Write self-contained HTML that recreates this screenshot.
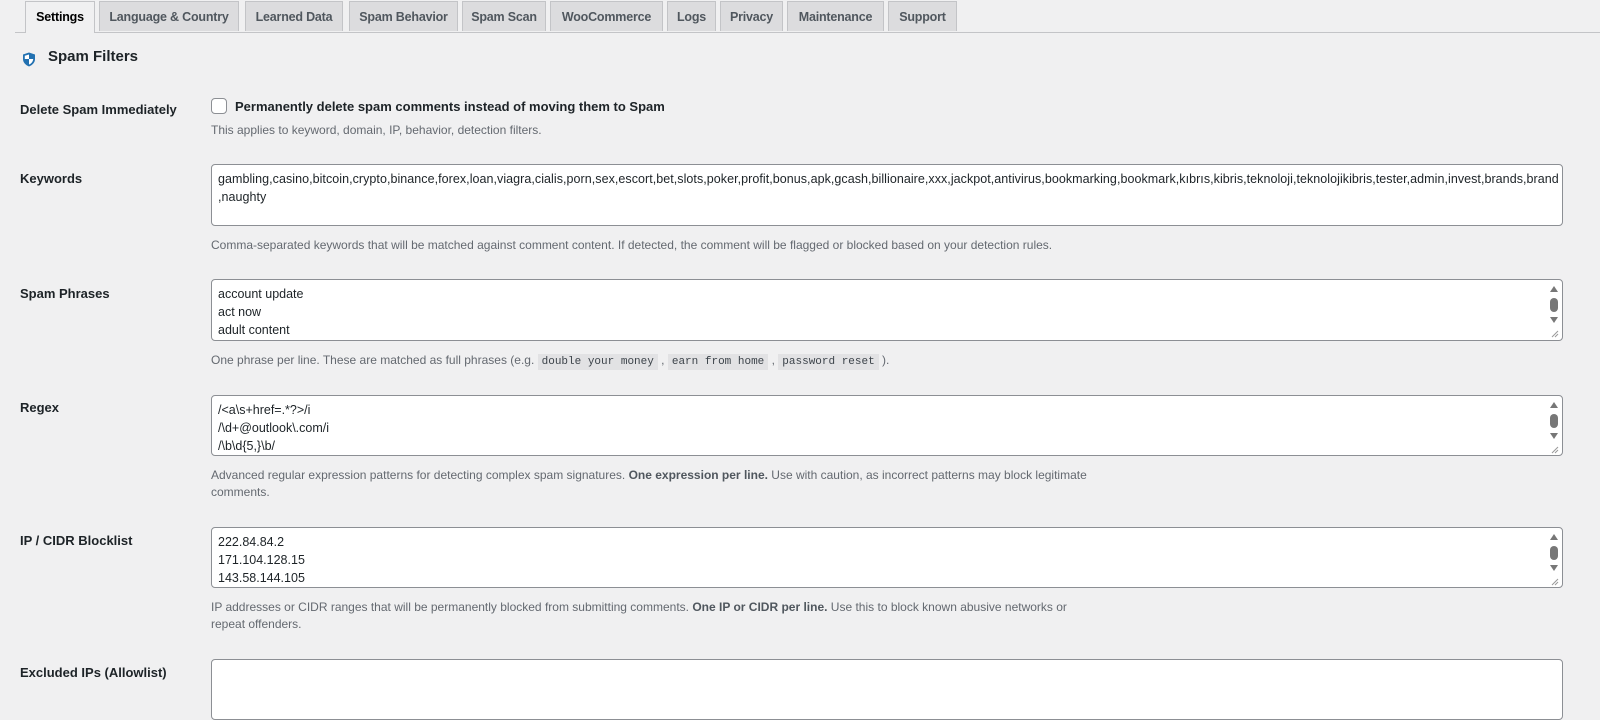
<!DOCTYPE html>
<html><head><meta charset="utf-8"><style>
body{margin:0;width:1600px;height:694px;overflow:hidden;background:#f0f0f1;font-family:"Liberation Sans",sans-serif;color:#1d2327;font-size:13px;position:relative}
.a{position:absolute;white-space:nowrap}
.tab{position:absolute;top:1px;height:30px;line-height:31px;background:#dcdcde;border:1px solid #c3c4c7;border-bottom:none;box-sizing:border-box;text-align:center;font-size:12.5px;font-weight:bold;color:#50575e;letter-spacing:-0.2px}
.tab.on{background:#f0f0f1;color:#000;height:32px}
.lbl{position:absolute;left:20px;font-weight:bold;font-size:13px}
.ta{position:absolute;left:211px;width:1352px;background:#fff;border:1px solid #8c8f94;border-radius:4px;box-sizing:border-box;padding:5px 6px;line-height:18px;font-size:12.5px;overflow:hidden}
.desc{position:absolute;left:211px;font-size:12px;color:#646970;line-height:17px}
.sb{position:absolute;right:3px;top:4px;width:10px}
code{background:#e2e2e4;font-family:"Liberation Mono",monospace;font-size:11px;padding:2px 4px;color:#3c434a}
</style></head><body>
<div class="a" style="left:15px;right:0;top:32px;border-top:1px solid #c3c4c7"></div>
<div class="tab on" style="left:25px;width:70px">Settings</div>
<div class="tab" style="left:99px;width:140px">Language &amp; Country</div>
<div class="tab" style="left:245px;width:98px">Learned Data</div>
<div class="tab" style="left:349px;width:109px">Spam Behavior</div>
<div class="tab" style="left:462px;width:84px">Spam Scan</div>
<div class="tab" style="left:550px;width:113px">WooCommerce</div>
<div class="tab" style="left:667px;width:49px">Logs</div>
<div class="tab" style="left:720px;width:63px">Privacy</div>
<div class="tab" style="left:787px;width:97px">Maintenance</div>
<div class="tab" style="left:888px;width:69px">Support</div>

<svg class="a" style="left:22px;top:52px" width="14" height="15" viewBox="0 0 14 15"><path d="M7 0.5L13 2.5V7C13 10.5 10.5 13 7 14.5C3.5 13 1 10.5 1 7V2.5Z" fill="#2271b1"/><path d="M7 2.5V7H2.8V3.8ZM7 7H11.2C11 9.8 9.2 11.6 7 12.6Z" fill="#fff"/></svg>
<div class="a" style="left:48px;top:48px;font-size:15px;font-weight:bold">Spam Filters</div>

<div class="lbl" style="top:102px">Delete Spam Immediately</div>
<div class="a" style="left:211px;top:98px;width:16px;height:16px;border:1px solid #8c8f94;border-radius:4px;background:#fff;box-sizing:border-box"></div>
<div class="a" style="left:235px;top:99px;font-weight:bold">Permanently delete spam comments instead of moving them to Spam</div>
<div class="desc" style="top:122px">This applies to keyword, domain, IP, behavior, detection filters.</div>

<div class="lbl" style="top:171px">Keywords</div>
<div class="ta" style="top:164px;height:62px;white-space:nowrap;letter-spacing:0.05px">gambling,casino,bitcoin,crypto,binance,forex,loan,viagra,cialis,porn,sex,escort,bet,slots,poker,profit,bonus,apk,gcash,billionaire,xxx,jackpot,antivirus,bookmarking,bookmark,kıbrıs,kibris,teknoloji,teknolojikibris,tester,admin,invest,brands,brand<br>,naughty</div>
<div class="desc" style="top:237px">Comma-separated keywords that will be matched against comment content. If detected, the comment will be flagged or blocked based on your detection rules.</div>

<div class="lbl" style="top:286px">Spam Phrases</div>
<div class="ta" style="top:279px;height:62px">account update<br>act now<br>adult content
<svg class="sb" height="54" viewBox="0 0 10 54"><path d="M1 8L5 2L9 8Z" fill="#777"/><rect x="1" y="14" width="8" height="14" rx="4" fill="#777"/><path d="M1 33L5 39L9 33Z" fill="#777"/><path d="M9 47L3 53M9 50L6 53" stroke="#999" stroke-width="1"/></svg></div>
<div class="desc" style="top:352px">One phrase per line. These are matched as full phrases (e.g. <code>double your money</code> , <code>earn from home</code> , <code>password reset</code> ).</div>

<div class="lbl" style="top:400px">Regex</div>
<div class="ta" style="top:395px;height:61px">/&lt;a\s+href=.*?&gt;/i<br>/\d+@outlook\.com/i<br>/\b\d{5,}\b/
<svg class="sb" height="54" viewBox="0 0 10 54"><path d="M1 8L5 2L9 8Z" fill="#777"/><rect x="1" y="14" width="8" height="14" rx="4" fill="#777"/><path d="M1 33L5 39L9 33Z" fill="#777"/><path d="M9 47L3 53M9 50L6 53" stroke="#999" stroke-width="1"/></svg></div>
<div class="desc" style="top:467px">Advanced regular expression patterns for detecting complex spam signatures. <b style="color:#50575e">One expression per line.</b> Use with caution, as incorrect patterns may block legitimate<br>comments.</div>

<div class="lbl" style="top:533px">IP / CIDR Blocklist</div>
<div class="ta" style="top:527px;height:61px">222.84.84.2<br>171.104.128.15<br>143.58.144.105
<svg class="sb" height="54" viewBox="0 0 10 54"><path d="M1 8L5 2L9 8Z" fill="#777"/><rect x="1" y="14" width="8" height="14" rx="4" fill="#777"/><path d="M1 33L5 39L9 33Z" fill="#777"/><path d="M9 47L3 53M9 50L6 53" stroke="#999" stroke-width="1"/></svg></div>
<div class="desc" style="top:599px">IP addresses or CIDR ranges that will be permanently blocked from submitting comments. <b style="color:#50575e">One IP or CIDR per line.</b> Use this to block known abusive networks or<br>repeat offenders.</div>

<div class="lbl" style="top:665px">Excluded IPs (Allowlist)</div>
<div class="ta" style="top:659px;height:61px"></div>
</body></html>
